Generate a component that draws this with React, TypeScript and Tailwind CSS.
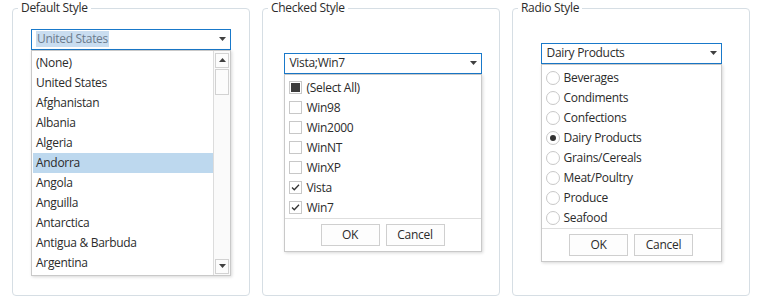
import React from "react";

const font = "font-['Open_Sans','Noto_Sans',sans-serif] text-[12px] tracking-[-0.3px]";

function Caret({ className = "" }: { className?: string }) {
  return (
    <svg width="7" height="4" viewBox="0 0 7 4" className={className}>
      <path d="M0 0 H7 L3.5 4 Z" fill="#404040" />
    </svg>
  );
}

function UpCaret() {
  return (
    <svg width="7" height="4" viewBox="0 0 7 4">
      <path d="M0 4 H7 L3.5 0 Z" fill="#404040" />
    </svg>
  );
}

function Panel({ title, inner = "", children }: { title: string; inner?: string; children: React.ReactNode }) {
  return (
    <div className="relative w-[238px] h-[288px] rounded-[4px] border border-[#d6dee4] flex items-center justify-center">
      <span className="absolute left-[5px] top-[-9px] bg-white px-[3px] leading-[16px] text-[#2b2b2b]">
        {title}
      </span>
      <div className={`flex flex-col ${inner}`}>{children}</div>
    </div>
  );
}

function Combo({ width, children }: { width: string; children: React.ReactNode }) {
  return (
    <div className={`${width} h-[21px] border border-[#1979ca] bg-white flex items-center pl-[5px] pr-[4px]`}>
      {children}
      <Caret className="ml-auto" />
    </div>
  );
}

const countries = [
  "(None)",
  "United States",
  "Afghanistan",
  "Albania",
  "Algeria",
  "Andorra",
  "Angola",
  "Anguilla",
  "Antarctica",
  "Antigua & Barbuda",
  "Argentina",
];

const oses: { name: string; state: "ind" | "off" | "on" }[] = [
  { name: "(Select All)", state: "ind" },
  { name: "Win98", state: "off" },
  { name: "Win2000", state: "off" },
  { name: "WinNT", state: "off" },
  { name: "WinXP", state: "off" },
  { name: "Vista", state: "on" },
  { name: "Win7", state: "on" },
];

const categories = [
  "Beverages",
  "Condiments",
  "Confections",
  "Dairy Products",
  "Grains/Cereals",
  "Meat/Poultry",
  "Produce",
  "Seafood",
];

const listBox = "bg-white border border-[#c9c9c9] shadow-[1px_1px_3px_rgba(0,0,0,0.16)]";

function Buttons() {
  return (
    <div className="border-t border-[#dedede] flex justify-center gap-[6px] pt-[5px] pb-[5px]">
      <button className="w-[59px] h-[22px] border border-[#cfcfcf] bg-[#fdfdfd] text-[#2b2b2b] leading-[20px]">OK</button>
      <button className="w-[59px] h-[22px] border border-[#cfcfcf] bg-[#fdfdfd] text-[#2b2b2b] leading-[20px]">Cancel</button>
    </div>
  );
}

function Check({ state }: { state: "ind" | "off" | "on" }) {
  return (
    <span className="w-[13px] h-[13px] border border-[#c8c8c8] bg-white flex items-center justify-center shrink-0">
      {state === "ind" && <span className="w-[9px] h-[9px] bg-[#3c3c3c]" />}
      {state === "on" && (
        <svg width="11" height="11" viewBox="0 0 11 11">
          <path d="M2 5.5 L4.3 7.8 L9 2.8" fill="none" stroke="#333" strokeWidth="1.3" />
        </svg>
      )}
    </span>
  );
}

export default function App() {
  return (
    <div className={`w-[766px] h-[303px] bg-white flex gap-[12px] pl-[12px] pt-[8px] text-[#2b2b2b] ${font}`}>
      <Panel title="Default Style">
        <Combo width="w-[200px]">
          <span className="bg-[#c9ddf0] text-[#6b7b8c] leading-[16px] px-[1px] -ml-[1px]">United States</span>
        </Combo>
        <div className={`${listBox} w-[200px] h-[226px] flex`}>
          <div className="flex-1 pl-[1px] py-[2px]">
            {countries.map((c) => (
              <div
                key={c}
                className={`h-[20px] flex items-center pl-[3px] ${c === "Andorra" ? "bg-[#bdd8ee]" : ""}`}
              >
                {c}
              </div>
            ))}
          </div>
          <div className="w-[17px] border-l border-[#dcdcdc] bg-[#fafafa] flex flex-col pl-[1px] pt-[2px] pb-[1px]">
            <div className="w-[14px] h-[15px] border border-[#d2d2d2] bg-[#fcfcfc] flex items-center justify-center">
              <UpCaret />
            </div>
            <div className="w-[14px] h-[26px] mt-[1px] border border-[#d2d2d2] bg-[#fcfcfc]" />
            <div className="flex-1" />
            <div className="w-[14px] h-[15px] border border-[#d2d2d2] bg-[#fcfcfc] flex items-center justify-center">
              <Caret />
            </div>
          </div>
        </div>
      </Panel>

      <Panel title="Checked Style" inner="ml-[3px]">
        <Combo width="w-[198px]">
          <span className="leading-[16px]">Vista;Win7</span>
        </Combo>
        <div className={`${listBox} w-[198px]`}>
          <div className="pt-[3px]">
            {oses.map((o) => (
              <div key={o.name} className="h-[20px] flex items-center pl-[4px] gap-[5px]">
                <Check state={o.state} />
                <span>{o.name}</span>
              </div>
            ))}
          </div>
          <Buttons />
        </div>
      </Panel>

      <Panel title="Radio Style">
        <Combo width="w-[181px]">
          <span className="leading-[16px]">Dairy Products</span>
        </Combo>
        <div className={`${listBox} w-[181px]`}>
          <div className="pt-[3px]">
            {categories.map((c) => (
              <div key={c} className="h-[20px] flex items-center pl-[4px] gap-[4px]">
                <span className="w-[14px] h-[14px] rounded-full border border-[#c8c8c8] bg-white flex items-center justify-center shrink-0">
                  {c === "Dairy Products" && <span className="w-[6px] h-[6px] rounded-full bg-[#333]" />}
                </span>
                <span>{c}</span>
              </div>
            ))}
          </div>
          <Buttons />
        </div>
      </Panel>
    </div>
  );
}
